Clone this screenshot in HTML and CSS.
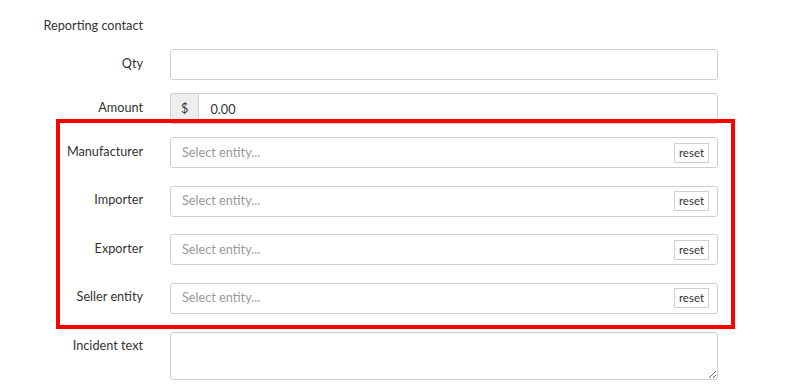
FILE: index.html
```html
<!DOCTYPE html>
<html lang="en">
<head>
    <meta charset="UTF-8">
    <meta name="viewport" content="width=device-width, initial-scale=1.0">
    <title>Incident report</title>
    <link rel="stylesheet" href="styles.css">
</head>
<body>
    <form class="report-form">
        <div class="form-row form-row-first">
            <label>Reporting contact</label>
            <div></div>
        </div>

        <div class="form-row">
            <label for="qty">Qty</label>
            <input type="text" id="qty" class="form-control">
        </div>

        <div class="form-row">
            <label for="amount">Amount</label>
            <div class="input-group">
                <span class="input-addon">$</span>
                <input type="text" id="amount" class="form-control" value="0.00">
            </div>
        </div>

        <!-- Entity pickers -->
        <div class="entity-group">
            <div class="form-row">
                <label>Manufacturer</label>
                <div class="entity-select">
                    <input type="text" placeholder="Select entity...">
                    <button type="button">reset</button>
                </div>
            </div>
            <div class="form-row">
                <label>Importer</label>
                <div class="entity-select">
                    <input type="text" placeholder="Select entity...">
                    <button type="button">reset</button>
                </div>
            </div>
            <div class="form-row">
                <label>Exporter</label>
                <div class="entity-select">
                    <input type="text" placeholder="Select entity...">
                    <button type="button">reset</button>
                </div>
            </div>
            <div class="form-row">
                <label>Seller entity</label>
                <div class="entity-select">
                    <input type="text" placeholder="Select entity...">
                    <button type="button">reset</button>
                </div>
            </div>
        </div>

        <div class="form-row form-row-top">
            <label for="incident">Incident text</label>
            <textarea id="incident" class="form-control"></textarea>
        </div>
    </form>
</body>
</html>
```

FILE: styles.css
```css
:root {
    --border: #cfcfcf;
    --text: #333;
    --muted: #9a9a9a;
}

body {
    font-family: Lato, 'Open Sans', sans-serif;
    font-size: 12.7px;
    color: var(--text);
    background: white;
    margin: 0;
    padding: 0;
}

.report-form {
    width: 718px;
    padding-top: 11px;
}

.form-row {
    display: grid;
    grid-template-columns: 143px 548px;
    column-gap: 27px;
    align-items: center;
    margin-bottom: 13px;
}

.form-row label {
    text-align: right;
    white-space: nowrap;
    padding-bottom: 4px;
}

.form-row-first {
    height: 31px;
    margin-bottom: 7px;
}

.form-row-top {
    align-items: start;
}

.form-row-top label {
    padding-top: 5px;
    padding-bottom: 0;
}

.form-control {
    box-sizing: border-box;
    height: 31px;
    width: 100%;
    border: 1px solid var(--border);
    border-radius: 3px;
    padding: 0 11px;
    font-family: inherit;
    font-size: 12.7px;
    color: var(--text);
    background: white;
    outline: none;
}

textarea.form-control {
    height: 48px;
    padding: 6px 11px;
    resize: vertical;
}

.input-group {
    display: flex;
}

.input-addon {
    box-sizing: border-box;
    width: 30px;
    height: 31px;
    line-height: 28px;
    text-align: center;
    background: #eeeeee;
    border: 1px solid var(--border);
    border-right: none;
    border-radius: 3px 0 0 3px;
}

.input-group .form-control {
    border-radius: 0 3px 3px 0;
}

/* red frame round the entity block */
.entity-group {
    position: relative;
    margin-bottom: 18px;
}

.entity-group .form-row {
    margin-bottom: 17.5px;
}

.entity-group .form-row:last-child {
    margin-bottom: 0;
}

.entity-group::after {
    content: '';
    position: absolute;
    left: 56px;
    right: -17px;
    top: -18px;
    bottom: -15px;
    border: 4px solid #ff0000;
    pointer-events: none;
}

.entity-select {
    box-sizing: border-box;
    display: flex;
    align-items: center;
    height: 31px;
    border: 1px solid var(--border);
    border-radius: 3px;
    padding: 0 8px 0 11px;
    background: white;
}

.entity-select input {
    flex: 1;
    border: none;
    outline: none;
    padding: 0 0 2px;
    font-family: inherit;
    font-size: 12.7px;
    color: var(--text);
    background: transparent;
}

.entity-select input::placeholder {
    color: var(--muted);
}

.entity-select button {
    box-sizing: border-box;
    height: 20px;
    width: 35px;
    padding: 0 0 1px;
    border: 1px solid var(--border);
    border-radius: 0;
    background: white;
    font-family: inherit;
    font-size: 11.5px;
    color: var(--text);
    cursor: pointer;
}
```
